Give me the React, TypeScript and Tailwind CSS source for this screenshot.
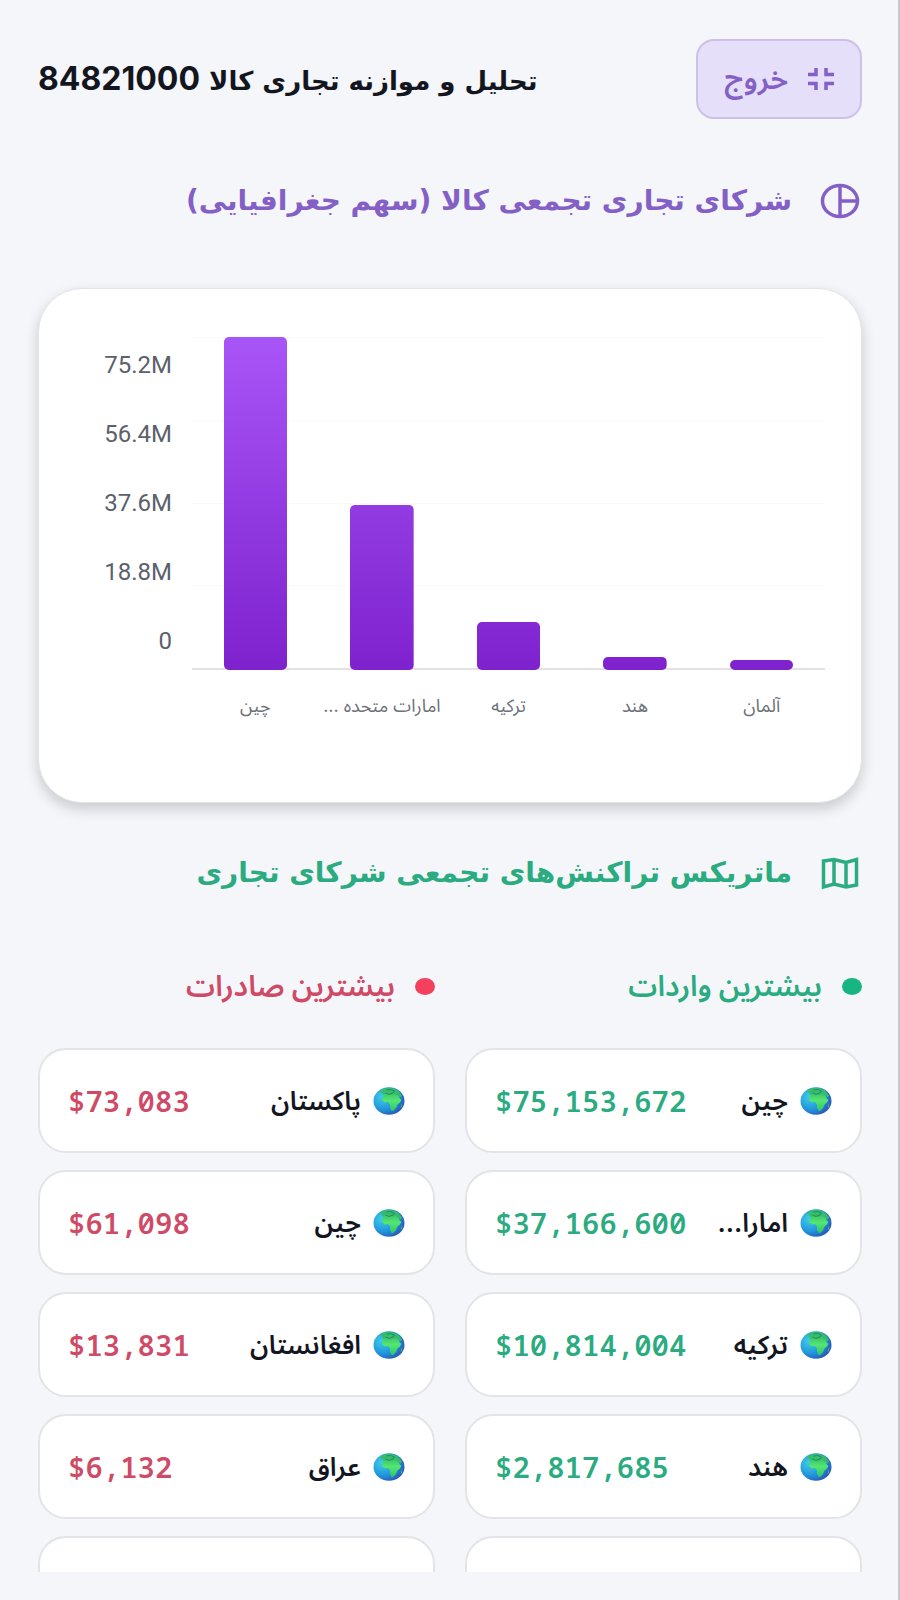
import { useState } from 'react'

const bars = [
  { label: 'چین', height: 333 },
  { label: 'امارات متحده ...', height: 165 },
  { label: 'ترکیه', height: 48 },
  { label: 'هند', height: 13 },
  { label: 'آلمان', height: 10 },
]

const ticks = ['75.2M', '56.4M', '37.6M', '18.8M', '0']

const imports = [
  { name: 'چین', amount: '$75,153,672' },
  { name: 'امارا...', amount: '$37,166,600' },
  { name: 'ترکیه', amount: '$10,814,004' },
  { name: 'هند', amount: '$2,817,685' },
]

const exports_ = [
  { name: 'پاکستان', amount: '$73,083' },
  { name: 'چین', amount: '$61,098' },
  { name: 'افغانستان', amount: '$13,831' },
  { name: 'عراق', amount: '$6,132' },
]

function ExitIcon() {
  return (
    <svg className="w-[26px] h-[22px]" viewBox="0 0 26 22" fill="none" stroke="currentColor" strokeWidth="3.500" aria-hidden="true">
      <path d="M0 6.500h8V0M26 6.500h-8V0M0 15.500h8V22M26 15.500h-8V22" />
    </svg>
  )
}

function PieIcon() {
  return (
    <svg className="w-[40px] h-[36px]" viewBox="0 0 40 36" fill="none" stroke="currentColor" strokeWidth="3.500" aria-hidden="true">
      <ellipse cx="20" cy="18" rx="17.500" ry="15.500" />
      <path d="M20 2v32M20 18h18" />
    </svg>
  )
}

function MapIcon() {
  return (
    <svg className="w-[40px] h-[36px]" viewBox="0 0 40 36" fill="none" stroke="currentColor" strokeWidth="3.500" aria-hidden="true">
      <path d="M3.500 6 14 4.500l12 3 10.500-3v25.500L26 32l-12-3-10.500 3zM14 4v25M26 7v25" />
    </svg>
  )
}

function Globe() {
  return (
    <svg className="w-8 h-7 shrink-0" viewBox="0 0 32 28" aria-hidden="true">
      <defs>
        <radialGradient id="sea" cx="0.3" cy="0.35" r="0.75">
          <stop offset="0" stopColor="#40cfe6" />
          <stop offset="0.6" stopColor="#2196dc" />
          <stop offset="1" stopColor="#2a55b8" />
        </radialGradient>
        <linearGradient id="land" x1="0" y1="0" x2="0" y2="1">
          <stop offset="0" stopColor="#3cc569" />
          <stop offset="0.4" stopColor="#55e672" />
          <stop offset="1" stopColor="#2fc46c" />
        </linearGradient>
      </defs>
      <ellipse cx="16" cy="14" rx="15.500" ry="13.700" fill="url(#sea)" />
      <path d="M7 3.500Q16-2 25 3.500l4 5-1.500 2-3-3-4 .5-4-.5-3 1-3.500-1z" fill="#35bd69" />
      <path d="M9 11 11 7.500l4.500-1 3 1 4-.5 3 1.500 1.500 3.500 1.500.5-1.500 3-2.500 2-1.500 3.500-3 3h-1.500l-1.500-3.500v-3l-2-2.500-3 .5-2.500-2z" fill="url(#land)" />
      <path d="M12.500 6l3.500 1.500 4-1.500 1.500-2-4-1.500-4 .5" fill="none" stroke="#1c7d62" strokeWidth="0.800" />
      <path d="M28.500 17.500l.8-1.500-.5 4-1.300 1z" fill="#3fcf70" />
    </svg>
  )
}

type Row = { name: string; amount: string }

function CountryList({ title, rows, dot, text }: { title: string; rows: Row[]; dot: string; text: string }) {
  return (
    <section className="min-w-0">
      <h3 className={`flex items-center gap-5 h-11 text-[29px] font-semibold ${text}`}>
        <span className={`w-5 h-[17px] rounded-[50%] ${dot}`} />
        {title}
      </h3>
      <ul className="mt-10 space-y-[17px]">
        {rows.map(row => (
          <li key={row.name} className="flex items-center justify-between h-[105px] px-7 bg-white border-2 border-[#e3e4e8] rounded-[28px]">
            <div className="flex items-center gap-3 text-[26px] leading-9 font-semibold text-[#14161f]">
              <Globe />
              <span className="whitespace-nowrap">{row.name}</span>
            </div>
            <span dir="ltr" className={`font-['Noto_Sans_Mono','DejaVu_Sans_Mono',monospace] text-[29px] leading-9 font-semibold ${text}`}>{row.amount}</span>
          </li>
        ))}
        {/* next row, still loading */}
        <li className="h-[105px] bg-white border-2 border-[#e3e4e8] rounded-[28px]" />
      </ul>
    </section>
  )
}

export default function App() {
  const [open, setOpen] = useState(true)

  return (
    <div dir="rtl" lang="fa" className="h-screen flex flex-col pb-7 bg-[#f4f6fa] border-r-2 border-[#c9cad0] font-['Inter','Noto_Sans_Arabic','Noto_Sans','DejaVu_Sans',sans-serif]">
      <div className="flex-1 min-h-0 overflow-hidden pt-[39px] pr-9 pl-[38px]">
        <header className="flex items-center justify-between">
          <button
            type="button"
            onClick={() => setOpen(!open)}
            className="flex items-center gap-5 h-20 px-[26px] bg-[#e6dff9] border-2 border-[#cdc0e9] rounded-[18px] text-[#8460c6] text-[29px] leading-9 font-semibold"
          >
            <ExitIcon />
            خروج
          </button>
          <h1 className="font-['DejaVu_Sans',sans-serif] text-[26px] font-bold text-[#14161f]">
            تحلیل و موازنه تجاری کالا <span className="font-['Inter',sans-serif] text-[32px]">84821000</span>
          </h1>
        </header>

        {/* Partner share chart */}
        <h2 className="flex items-center gap-7 h-11 mt-[60px] pr-0.5 font-['DejaVu_Sans',sans-serif] text-[28px] font-bold text-[#8460c6]">
          <PieIcon />
          شرکای تجاری تجمعی کالا (سهم جغرافیایی)
        </h2>

        <div dir="ltr" className="flex gap-5 h-[515px] mt-[65px] pt-12 pr-9 pl-[65px] bg-white border border-[#e3e4e8] rounded-[44px] shadow-[0_6px_14px_rgba(0,0,0,0.18)]">
          <div className="w-[68px] pt-[11px] text-right font-['Roboto',sans-serif] text-2xl leading-[34px] text-[#5b616b]">
            {ticks.map(tick => (
              <div key={tick} className="mb-[35px]">{tick}</div>
            ))}
          </div>
          <div className="flex-1 min-w-0">
            <div className="relative h-[333px]">
              <div className="absolute inset-0 flex flex-col justify-between">
                <div className="h-px bg-[#f8f8fa]" />
                <div className="h-px bg-[#f8f8fa]" />
                <div className="h-px bg-[#f8f8fa]" />
                <div className="h-px bg-[#f8f8fa]" />
                <div className="h-[2px] bg-[#e2e2e4]" />
              </div>
              <div className="relative h-full grid grid-cols-5 items-end">
                {bars.map(bar => (
                  <div
                    key={bar.label}
                    className="w-1/2 mx-auto rounded-[5px] bg-[linear-gradient(to_top,#7e22ce,#a855f7)] bg-[length:100%_333px] bg-bottom"
                    style={{ height: bar.height }}
                  />
                ))}
              </div>
            </div>
            <div className="grid grid-cols-5 mt-[18px] text-center text-lg leading-[36px] text-[#6b7079]">
              {bars.map(bar => (
                <div key={bar.label} dir="rtl" className="whitespace-nowrap">{bar.label}</div>
              ))}
            </div>
          </div>
        </div>

        {/* Transactions */}
        <h2 className="flex items-center gap-7 h-11 mt-12 pr-0.5 font-['DejaVu_Sans',sans-serif] text-[28px] font-bold text-[#2aab80]">
          <MapIcon />
          ماتریکس تراکنش‌های تجمعی شرکای تجاری
        </h2>

        <div className="grid grid-cols-2 gap-[30px] mt-[69px]">
          <CountryList title="بیشترین واردات" rows={imports} dot="bg-[#18b582]" text="text-[#2aab80]" />
          <CountryList title="بیشترین صادرات" rows={exports_} dot="bg-[#f43f5e]" text="text-[#cf4a66]" />
        </div>
      </div>
    </div>
  )
}
